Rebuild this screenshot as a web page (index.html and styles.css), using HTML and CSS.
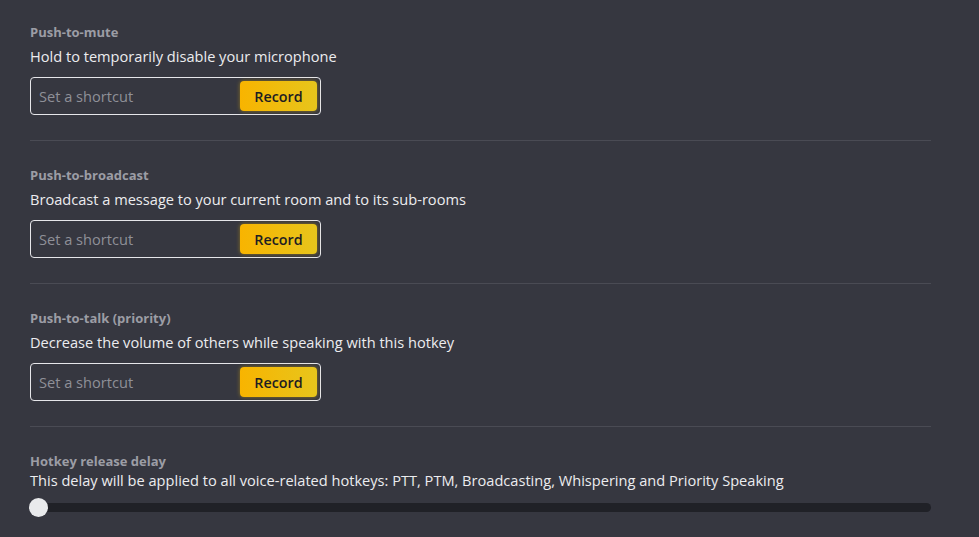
FILE: index.html
```html
<!DOCTYPE html>
<html>
<head>
<meta charset="utf-8">
<link rel="stylesheet" href="styles.css">
</head>
<body>
<div class="page">
  <section class="setting">
    <div class="title">Push-to-mute</div>
    <div class="desc">Hold to temporarily disable your microphone</div>
    <div class="shortcut">
      <span class="placeholder">Set a shortcut</span>
      <button class="record">Record</button>
    </div>
  </section>
  <section class="setting">
    <div class="title">Push-to-broadcast</div>
    <div class="desc">Broadcast a message to your current room and to its sub-rooms</div>
    <div class="shortcut">
      <span class="placeholder">Set a shortcut</span>
      <button class="record">Record</button>
    </div>
  </section>
  <section class="setting">
    <div class="title">Push-to-talk (priority)</div>
    <div class="desc">Decrease the volume of others while speaking with this hotkey</div>
    <div class="shortcut">
      <span class="placeholder">Set a shortcut</span>
      <button class="record">Record</button>
    </div>
  </section>
  <section class="setting last">
    <div class="title">Hotkey release delay</div>
    <div class="desc tight">This delay will be applied to all voice-related hotkeys: PTT, PTM, Broadcasting, Whispering and Priority Speaking</div>
    <div class="slider">
      <div class="track"></div>
      <div class="thumb"></div>
    </div>
  </section>
</div>
</body>
</html>
```

FILE: styles.css
```css
html, body {
  margin: 0;
  padding: 0;
  background: #363740;
  font-family: "Open Sans", "Noto Sans", sans-serif;
  overflow: hidden;
}
.page {
  width: 901px;
  padding: 23px 0 0 30px;
}
.setting {
  border-bottom: 1px solid #4a4b54;
  padding-bottom: 25px;
  margin-bottom: 25px;
}
.setting.last {
  border-bottom: none;
}
.title {
  font-size: 13px;
  font-weight: 700;
  color: #9c9da5;
  line-height: 18px;
}
.desc {
  font-size: 14.6px;
  color: #ececef;
  line-height: 20px;
  margin-top: 5px;
}
.desc.tight {
  margin-top: 0;
}
.shortcut {
  margin-top: 11px;
  width: 291px;
  height: 38px;
  box-sizing: border-box;
  border: 1px solid #e6e6ea;
  border-radius: 4px;
  display: flex;
  align-items: center;
  justify-content: space-between;
  padding: 0 3px 0 8px;
}
.placeholder {
  font-size: 14.6px;
  color: #8f9098;
}
.record {
  width: 77px;
  height: 30px;
  border: none;
  border-radius: 4px;
  background: linear-gradient(90deg, #f8b400, #e7c51c);
  box-shadow: 0 0 4px rgba(245, 190, 0, 0.45);
  color: #1d1d22;
  font-family: inherit;
  font-size: 14.3px;
  font-weight: 600;
  padding: 0;
}
.slider {
  position: relative;
  margin-top: 8px;
  height: 19px;
  display: flex;
  align-items: center;
}
.track {
  width: 901px;
  height: 9px;
  border-radius: 5px;
  background: #202127;
}
.thumb {
  position: absolute;
  left: -1px;
  top: 0;
  width: 19px;
  height: 19px;
  border-radius: 50%;
  background: #e9eaec;
}
```
